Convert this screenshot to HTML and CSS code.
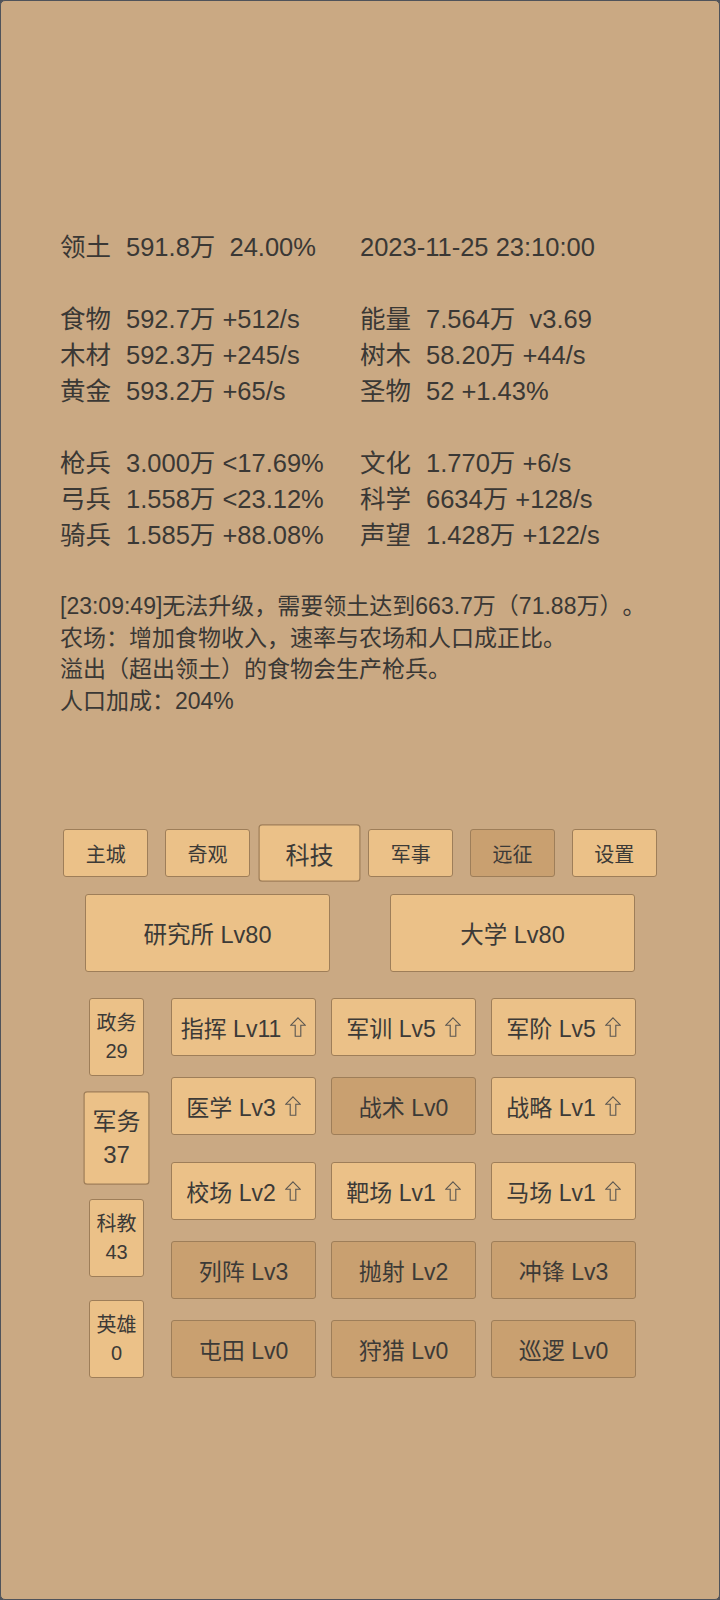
FILE: index.html
```html
<!DOCTYPE html>
<html lang="zh">
<head>
<meta charset="utf-8">
<title>科技</title>
<link rel="stylesheet" href="styles.css">
</head>
<body>
<div class="screen">
  <div class="stats">
    <div class="row"><div class="cell"><span class="lbl">领土</span><span class="val">591.8万  24.00%</span></div><div class="cell"><span class="val">2023-11-25 23:10:00</span></div></div>
    <div class="row blank"></div>
    <div class="row"><div class="cell"><span class="lbl">食物</span><span class="val">592.7万 +512/s</span></div><div class="cell"><span class="lbl">能量</span><span class="val">7.564万  v3.69</span></div></div>
    <div class="row"><div class="cell"><span class="lbl">木材</span><span class="val">592.3万 +245/s</span></div><div class="cell"><span class="lbl">树木</span><span class="val">58.20万 +44/s</span></div></div>
    <div class="row"><div class="cell"><span class="lbl">黄金</span><span class="val">593.2万 +65/s</span></div><div class="cell"><span class="lbl">圣物</span><span class="val">52 +1.43%</span></div></div>
    <div class="row blank"></div>
    <div class="row"><div class="cell"><span class="lbl">枪兵</span><span class="val">3.000万 &lt;17.69%</span></div><div class="cell"><span class="lbl">文化</span><span class="val">1.770万 +6/s</span></div></div>
    <div class="row"><div class="cell"><span class="lbl">弓兵</span><span class="val">1.558万 &lt;23.12%</span></div><div class="cell"><span class="lbl">科学</span><span class="val">6634万 +128/s</span></div></div>
    <div class="row"><div class="cell"><span class="lbl">骑兵</span><span class="val">1.585万 +88.08%</span></div><div class="cell"><span class="lbl">声望</span><span class="val">1.428万 +122/s</span></div></div>
  </div>

  <div class="log">
    <p>[23:09:49]无法升级，需要领土达到663.7万（71.88万）。</p>
    <p>农场：增加食物收入，速率与农场和人口成正比。</p>
    <p>溢出（超出领土）的食物会生产枪兵。</p>
    <p>人口加成：204%</p>
  </div>

  <div class="tabs">
    <div class="slot"><div class="btn tab">主城</div></div>
    <div class="slot"><div class="btn tab">奇观</div></div>
    <div class="slot"><div class="btn tab sel">科技</div></div>
    <div class="slot"><div class="btn tab">军事</div></div>
    <div class="slot"><div class="btn tab dark">远征</div></div>
    <div class="slot"><div class="btn tab">设置</div></div>
  </div>

  <div class="bigrow">
    <div class="half"><div class="btn big">研究所 Lv80</div></div>
    <div class="half"><div class="btn big">大学 Lv80</div></div>
  </div>

  <div class="section">
    <div class="side">
      <div class="btn sidebtn"><span>政务</span><span>29</span></div>
      <div class="btn sidebtn sel"><span>军务</span><span>37</span></div>
      <div class="btn sidebtn"><span>科教</span><span>43</span></div>
      <div class="btn sidebtn"><span>英雄</span><span>0</span></div>
    </div>
    <div class="techs">
      <div class="grid">
        <div class="btn tech">指挥 Lv11<svg class="up" viewBox="0 0 16 20"><path d="M8 0.8 L15.2 8.2 L10.8 8.2 L10.8 19.2 L5.2 19.2 L5.2 8.2 L0.8 8.2 Z"/></svg></div>
        <div class="btn tech">军训 Lv5<svg class="up" viewBox="0 0 16 20"><path d="M8 0.8 L15.2 8.2 L10.8 8.2 L10.8 19.2 L5.2 19.2 L5.2 8.2 L0.8 8.2 Z"/></svg></div>
        <div class="btn tech">军阶 Lv5<svg class="up" viewBox="0 0 16 20"><path d="M8 0.8 L15.2 8.2 L10.8 8.2 L10.8 19.2 L5.2 19.2 L5.2 8.2 L0.8 8.2 Z"/></svg></div>
        <div class="btn tech">医学 Lv3<svg class="up" viewBox="0 0 16 20"><path d="M8 0.8 L15.2 8.2 L10.8 8.2 L10.8 19.2 L5.2 19.2 L5.2 8.2 L0.8 8.2 Z"/></svg></div>
        <div class="btn tech dark">战术 Lv0</div>
        <div class="btn tech">战略 Lv1<svg class="up" viewBox="0 0 16 20"><path d="M8 0.8 L15.2 8.2 L10.8 8.2 L10.8 19.2 L5.2 19.2 L5.2 8.2 L0.8 8.2 Z"/></svg></div>
      </div>
      <div class="grid">
        <div class="btn tech">校场 Lv2<svg class="up" viewBox="0 0 16 20"><path d="M8 0.8 L15.2 8.2 L10.8 8.2 L10.8 19.2 L5.2 19.2 L5.2 8.2 L0.8 8.2 Z"/></svg></div>
        <div class="btn tech">靶场 Lv1<svg class="up" viewBox="0 0 16 20"><path d="M8 0.8 L15.2 8.2 L10.8 8.2 L10.8 19.2 L5.2 19.2 L5.2 8.2 L0.8 8.2 Z"/></svg></div>
        <div class="btn tech">马场 Lv1<svg class="up" viewBox="0 0 16 20"><path d="M8 0.8 L15.2 8.2 L10.8 8.2 L10.8 19.2 L5.2 19.2 L5.2 8.2 L0.8 8.2 Z"/></svg></div>
        <div class="btn tech dark">列阵 Lv3</div>
        <div class="btn tech dark">抛射 Lv2</div>
        <div class="btn tech dark">冲锋 Lv3</div>
        <div class="btn tech dark">屯田 Lv0</div>
        <div class="btn tech dark">狩猎 Lv0</div>
        <div class="btn tech dark">巡逻 Lv0</div>
      </div>
    </div>
  </div>
</div>
</body>
</html>
```

FILE: styles.css
```css
html {
  background: #4f535a;
}
body {
  margin: 0;
  font-family: "Liberation Sans", "Noto Sans CJK SC", sans-serif;
  color: #3a3835;
  text-spacing-trim: space-all;
}
.screen {
  box-sizing: border-box;
  width: 720px;
  height: 1600px;
  border: 1px solid #4f535a;
  border-radius: 5px;
  background: #caa983;
  padding-top: 228px;
  overflow: hidden;
}
.stats {
  margin-left: 59px;
  font-size: 25.5px;
  line-height: 36px;
}
.row {
  display: grid;
  grid-template-columns: 300px 300px;
  height: 36px;
}
.cell {
  white-space: pre;
}
.lbl {
  display: inline-block;
  width: 66px;
}
.log {
  margin: 38px 0 0 59px;
  font-size: 23px;
  line-height: 31.5px;
}
.log p {
  margin: 0;
  white-space: nowrap;
}
.btn {
  box-sizing: border-box;
  background: #ebc188;
  border: 1px solid #9e7e59;
  border-radius: 3px;
  display: flex;
  align-items: center;
  justify-content: center;
  color: #3c3a37;
}
.btn.dark {
  background: #c9a070;
}
.tabs {
  width: 610px;
  margin: 112px auto 0;
  display: flex;
  height: 48px;
}
.slot {
  flex: 1;
  display: flex;
  justify-content: center;
  align-items: center;
}
.tab {
  width: 85px;
  height: 48px;
  font-size: 20px;
}
.sel {
  transform: scale(1.2);
}
.bigrow {
  width: 610px;
  margin: 17px auto 0;
  display: flex;
}
.half {
  flex: 1;
  display: flex;
  justify-content: center;
}
.big {
  width: 245px;
  height: 78px;
  font-size: 23.5px;
}
.section {
  margin: 26px 0 0 83px;
  display: flex;
}
.side {
  width: 65px;
  display: flex;
  flex-direction: column;
  align-items: center;
  justify-content: space-between;
}
.sidebtn {
  width: 55px;
  height: 78px;
  flex-direction: column;
  font-size: 20px;
  line-height: 28px;
}
.techs {
  margin-left: 22px;
}
.grid {
  display: grid;
  grid-template-columns: repeat(3, 145px);
  column-gap: 15px;
  row-gap: 21px;
}
.grid + .grid {
  margin-top: 27px;
}
.tech {
  height: 58px;
  font-size: 23px;
}
.up {
  width: 16px;
  height: 20px;
  margin-left: 9px;
  fill: none;
  stroke: #5a5650;
  stroke-width: 1.1;
  stroke-linejoin: miter;
}
```
